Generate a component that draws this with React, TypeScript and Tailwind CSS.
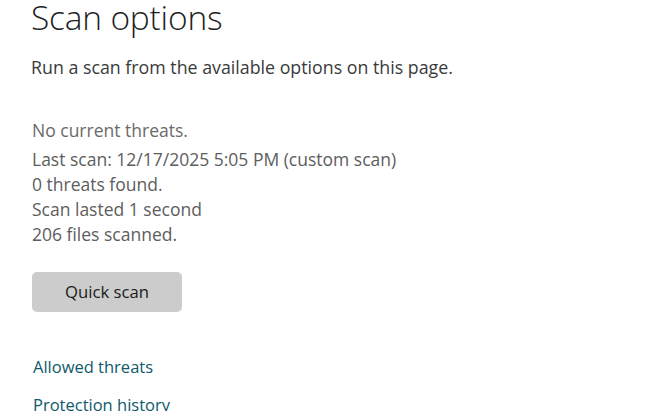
export default function App() {
  return (
    <div className="w-[654px] h-[411px] overflow-hidden bg-white" style={{ fontFamily: '"Open Sans", "Noto Sans", sans-serif' }}>
      <div className="pl-[31px] -mt-[7px]">
        <h1 className="text-[33.5px] font-light text-[#1f1f1f] leading-[48px] tracking-[-0.2px]">Scan options</h1>
        <p className="mt-[13px] text-[17.8px] text-[#3a3a3a] leading-[26px]">Run a scan from the available options on this page.</p>
        <div className="mt-[38px] pl-[1px] text-[17.5px] text-[#5d5d5d] leading-[25px]">
          <p className="text-[#6a6a6a]">No current threats.</p>
          <p className="mt-[4px]">Last scan: 12/17/2025 5:05 PM (custom scan)</p>
          <p>0 threats found.</p>
          <p>Scan lasted 1 second</p>
          <p>206 files scanned.</p>
        </div>
        <button className="mt-[25px] ml-[1px] w-[150px] h-[40px] rounded-[5px] bg-[#cccccc] text-[16.7px] text-[#1a1a1a]">Quick scan</button>
        <div className="mt-[42px] pl-[2px] flex flex-col gap-[13px] text-[16.5px] text-[#0e5a6a] leading-[25px]">
          <a>Allowed threats</a>
          <a>Protection history</a>
        </div>
      </div>
    </div>
  );
}
